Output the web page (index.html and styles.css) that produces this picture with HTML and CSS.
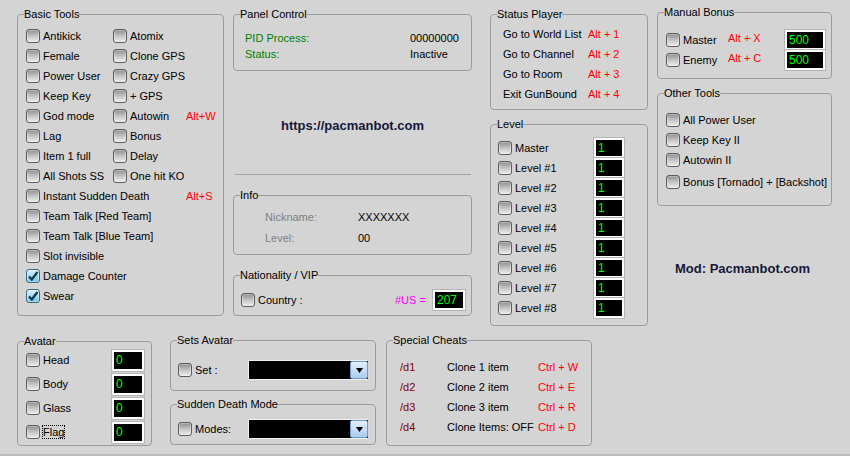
FILE: index.html
```html
<!DOCTYPE html>
<html lang="en">
<head>
    <meta charset="UTF-8">
    <title>Pacmanbot</title>
    <link rel="stylesheet" href="styles.css">
</head>
<body>
<div class="window">
    <div class="top">
        <div class="col c1">
            <fieldset class="basic">
                <legend>Basic Tools</legend>
                <div class="row"><label class="opt w1"><span class="chk"></span>Antikick</label><label class="opt w2"><span class="chk"></span>Atomix</label></div>
                <div class="row"><label class="opt w1"><span class="chk"></span>Female</label><label class="opt w2"><span class="chk"></span>Clone GPS</label></div>
                <div class="row"><label class="opt w1"><span class="chk"></span>Power User</label><label class="opt w2"><span class="chk"></span>Crazy GPS</label></div>
                <div class="row"><label class="opt w1"><span class="chk"></span>Keep Key</label><label class="opt w2"><span class="chk"></span>+ GPS</label></div>
                <div class="row"><label class="opt w1"><span class="chk"></span>God mode</label><label class="opt w2"><span class="chk"></span>Autowin</label><span class="hot">Alt+W</span></div>
                <div class="row"><label class="opt w1"><span class="chk"></span>Lag</label><label class="opt w2"><span class="chk"></span>Bonus</label></div>
                <div class="row"><label class="opt w1"><span class="chk"></span>Item 1 full</label><label class="opt w2"><span class="chk"></span>Delay</label></div>
                <div class="row"><label class="opt w1"><span class="chk"></span>All Shots SS</label><label class="opt w2"><span class="chk"></span>One hit KO</label></div>
                <div class="row"><label class="opt w12"><span class="chk"></span>Instant Sudden Death</label><span class="hot">Alt+S</span></div>
                <div class="row"><label class="opt"><span class="chk"></span>Team Talk [Red Team]</label></div>
                <div class="row"><label class="opt"><span class="chk"></span>Team Talk [Blue Team]</label></div>
                <div class="row"><label class="opt"><span class="chk"></span>Slot invisible</label></div>
                <div class="row"><label class="opt"><span class="chk on"><svg width="12" height="12" viewBox="0 0 12 12"><path d="M2 6.5 L4.8 9.5 L10.5 2" fill="none" stroke="#0d3b4c" stroke-width="2.2"/></svg></span>Damage Counter</label></div>
                <div class="row"><label class="opt"><span class="chk on"><svg width="12" height="12" viewBox="0 0 12 12"><path d="M2 6.5 L4.8 9.5 L10.5 2" fill="none" stroke="#0d3b4c" stroke-width="2.2"/></svg></span>Swear</label></div>
            </fieldset>
        </div>

        <div class="col c2">
            <fieldset class="panel">
                <legend>Panel Control</legend>
                <div class="line16"><span class="green key">PID Process:</span><span>00000000</span></div>
                <div class="line16"><span class="green key">Status:</span><span>Inactive</span></div>
            </fieldset>
            <div class="url">https://pacmanbot.com</div>
            <div class="sep"></div>
            <fieldset class="info">
                <legend>Info</legend>
                <div class="line21"><span class="grey key2">Nickname:</span><span>XXXXXXX</span></div>
                <div class="line21"><span class="grey key2">Level:</span><span>00</span></div>
            </fieldset>
            <fieldset class="nation">
                <legend>Nationality / VIP</legend>
                <div class="row r20">
                    <label class="opt wc"><span class="chk"></span>Country :</label>
                    <span class="magenta wus">#US =</span>
                    <span class="box b32">207</span>
                </div>
            </fieldset>
        </div>

        <div class="col c3">
            <fieldset class="status">
                <legend>Status Player</legend>
                <div class="row"><span class="ws">Go to World List</span><span class="hot">Alt + 1</span></div>
                <div class="row"><span class="ws">Go to Channel</span><span class="hot">Alt + 2</span></div>
                <div class="row"><span class="ws">Go to Room</span><span class="hot">Alt + 3</span></div>
                <div class="row"><span class="ws">Exit GunBound</span><span class="hot">Alt + 4</span></div>
            </fieldset>
            <fieldset class="level">
                <legend>Level</legend>
                <div class="row"><label class="opt wl"><span class="chk"></span>Master</label><span class="box b30">1</span></div>
                <div class="row"><label class="opt wl"><span class="chk"></span>Level #1</label><span class="box b30">1</span></div>
                <div class="row"><label class="opt wl"><span class="chk"></span>Level #2</label><span class="box b30">1</span></div>
                <div class="row"><label class="opt wl"><span class="chk"></span>Level #3</label><span class="box b30">1</span></div>
                <div class="row"><label class="opt wl"><span class="chk"></span>Level #4</label><span class="box b30">1</span></div>
                <div class="row"><label class="opt wl"><span class="chk"></span>Level #5</label><span class="box b30">1</span></div>
                <div class="row"><label class="opt wl"><span class="chk"></span>Level #6</label><span class="box b30">1</span></div>
                <div class="row"><label class="opt wl"><span class="chk"></span>Level #7</label><span class="box b30">1</span></div>
                <div class="row"><label class="opt wl"><span class="chk"></span>Level #8</label><span class="box b30">1</span></div>
            </fieldset>
        </div>

        <div class="col c4">
            <fieldset class="bonus">
                <legend>Manual Bonus</legend>
                <div class="row"><label class="opt wm"><span class="chk"></span>Master</label><span class="hot wa up">Alt + X</span><span class="box b40">500</span></div>
                <div class="row"><label class="opt wm"><span class="chk"></span>Enemy</label><span class="hot wa up">Alt + C</span><span class="box b40">500</span></div>
            </fieldset>
            <fieldset class="other">
                <legend>Other Tools</legend>
                <div class="row"><label class="opt"><span class="chk"></span>All Power User</label></div>
                <div class="row"><label class="opt"><span class="chk"></span>Keep Key II</label></div>
                <div class="row"><label class="opt"><span class="chk"></span>Autowin II</label></div>
                <div class="row gap2"><label class="opt"><span class="chk"></span>Bonus [Tornado] + [Backshot]</label></div>
            </fieldset>
            <div class="mod">Mod: Pacmanbot.com</div>
        </div>
    </div>

    <div class="bottom">
        <fieldset class="avatar">
            <legend>Avatar</legend>
            <div class="row r24"><label class="opt wv"><span class="chk"></span>Head</label><span class="box b32 h21">0</span></div>
            <div class="row r24"><label class="opt wv"><span class="chk"></span>Body</label><span class="box b32 h21">0</span></div>
            <div class="row r24"><label class="opt wv"><span class="chk"></span>Glass</label><span class="box b32 h21">0</span></div>
            <div class="row r24"><label class="opt wv"><span class="chk"></span><span class="focus">Flag</span></label><span class="box b32 h21">0</span></div>
        </fieldset>

        <div class="col c6">
            <fieldset class="sets">
                <legend>Sets Avatar</legend>
                <div class="row"><label class="opt wd"><span class="chk"></span>Set :</label><span class="combo"><span class="drop"><svg width="7" height="5" viewBox="0 0 7 5"><path d="M0 0 H7 L3.5 5 Z" fill="#000"/></svg></span></span></div>
            </fieldset>
            <fieldset class="sudden">
                <legend>Sudden Death Mode</legend>
                <div class="row"><label class="opt wd"><span class="chk"></span>Modes:</label><span class="combo"><span class="drop"><svg width="7" height="5" viewBox="0 0 7 5"><path d="M0 0 H7 L3.5 5 Z" fill="#000"/></svg></span></span></div>
            </fieldset>
        </div>

        <fieldset class="special">
            <legend>Special Cheats</legend>
            <div class="row"><span class="cmd">/d1</span><span class="what">Clone 1 item</span><span class="hot">Ctrl + W</span></div>
            <div class="row"><span class="cmd">/d2</span><span class="what">Clone 2 item</span><span class="hot">Ctrl + E</span></div>
            <div class="row"><span class="cmd">/d3</span><span class="what">Clone 3 item</span><span class="hot">Ctrl + R</span></div>
            <div class="row"><span class="cmd">/d4</span><span class="what">Clone Items: OFF</span><span class="hot">Ctrl + D</span></div>
        </fieldset>
    </div>
</div>
</body>
</html>
```

FILE: styles.css
```css
body {
    margin: 0;
    background-color: #d4d4d4;
    font-family: "Liberation Sans", Arial, sans-serif;
    font-size: 11px;
    color: #000000;
    overflow: hidden;
}

.window {
    width: 850px;
    height: 454px;
    border-bottom: 2px solid #bcbcbc;
}

.top {
    display: flex;
    align-items: flex-start;
    height: 334px;
    padding: 8px 0 0 17px;
    box-sizing: border-box;
}

.bottom {
    display: flex;
    align-items: flex-start;
    padding-left: 17px;
}

.col {
    display: flex;
    flex-direction: column;
}

.c1 { width: 207px; }
.c2 { width: 239px; margin-left: 9px; }
.c3 { width: 158px; margin-left: 18px; }
.c4 { width: 175px; margin-left: 9px; margin-top: -2px; }
.c6 { width: 206px; margin-left: 18px; }

/* --pl is the inner left padding; the legend always sits 7px from the border */
fieldset {
    --pl: 0px;
    margin: 0;
    padding: 0 0 0 var(--pl);
    border: 1px solid #9c9c9c;
    border-radius: 4px;
    min-width: 0;
}

legend {
    padding: 0;
    margin-left: calc(6px - var(--pl));
    line-height: 13px;
}

.row {
    display: flex;
    align-items: center;
    height: 20px;
    white-space: nowrap;
}

.r20 { height: 20px; }
.r24 { height: 24px; }
.gap2 { margin-top: 2px; }

.opt {
    display: flex;
    align-items: center;
    gap: 3px;
}

.chk {
    width: 14px;
    height: 14px;
    box-sizing: border-box;
    border: 1px solid #5c5c5c;
    border-radius: 3px;
    background: linear-gradient(#8c8c8c, #c4c4c4 50%, #ededed);
    box-shadow: inset 0 0 0 1px rgba(255, 255, 255, 0.35);
    flex: none;
    display: flex;
    align-items: center;
    justify-content: center;
}

.chk.on {
    border-color: #3b6b7e;
    background: linear-gradient(#d9f1fb, #79c3e4);
}

.hot { color: #ff0000; }
.green { color: #008000; }
.grey { color: #808080; }
.magenta { color: #ff00ff; }

.box {
    display: flex;
    align-items: center;
    box-sizing: border-box;
    height: 20px;
    padding-left: 2px;
    background: #000000;
    color: #00ff00;
    border: 2px solid #ffffff;
    box-shadow: 0 0 0 1px #b4b4b4;
    font-size: 12px;
}

.b30 { width: 30px; }
.b32 { width: 32px; }
.b40 { width: 40px; }
.h21 { height: 21px; }

/* Basic Tools */
.basic { --pl: 8px; padding-top: 5px; padding-bottom: 9px; }
.w1 { width: 87px; }
.w2 { width: 73px; }
.w12 { width: 160px; }

/* Panel Control */
.panel { --pl: 11px; padding-top: 9px; padding-bottom: 8px; }
.line16 { display: flex; height: 16px; align-items: center; }
.line21 { display: flex; height: 21px; align-items: center; }
.key { width: 165px; }
.key2 { width: 93px; }

.url {
    margin-top: 47px;
    line-height: 16px;
    text-align: center;
    font-size: 13px;
    font-weight: bold;
    color: #14183a;
}

.sep {
    height: 1px;
    margin: 40px 1px 0 2px;
    background: #a2a2a2;
}

.info { --pl: 31px; margin-top: 14px; padding-top: 4px; padding-bottom: 6px; }

.nation { --pl: 7px; margin-top: 14px; padding-top: 8px; padding-bottom: 5px; }
.wc { width: 154px; }
.wus { width: 38px; }

/* Status / Level */
.status { --pl: 12px; padding-top: 3px; padding-bottom: 5px; }
.ws { width: 85px; }

.level { --pl: 7px; margin-top: 8px; padding-top: 7px; padding-bottom: 7px; }
.wl { width: 96px; }

/* Manual bonus / other */
.bonus { --pl: 8px; padding-top: 11px; padding-bottom: 8px; }
.wm { width: 62px; }
.wa { width: 57px; }
.up { position: relative; top: -2px; }

.other { --pl: 8px; margin-top: 8px; padding-top: 10px; padding-bottom: 13px; }

.mod {
    margin-top: 55px;
    padding-left: 18px;
    line-height: 16px;
    font-size: 13px;
    font-weight: bold;
    color: #14183a;
}

/* Bottom row */
.avatar { --pl: 8px; width: 135px; margin-top: 1px; padding-bottom: 1px; box-sizing: border-box; }
.wv { width: 86px; }
.focus { outline: 1px dotted #000000; outline-offset: 0; }

.sets { --pl: 7px; padding-top: 13px; padding-bottom: 10px; }
.sudden { --pl: 7px; margin-top: 7px; padding-top: 8px; padding-bottom: 5px; }
.wd { width: 70px; }

.combo {
    display: flex;
    justify-content: flex-end;
    box-sizing: border-box;
    width: 120px;
    height: 20px;
    background: #000000;
    border: 1px solid #f0f0f0;
    border-right: none;
}

.drop {
    display: flex;
    align-items: center;
    justify-content: center;
    box-sizing: border-box;
    width: 18px;
    height: 100%;
    border: 1px solid #6f98c8;
    border-radius: 2px;
    background: linear-gradient(#e2f0fd, #a9cbf1);
}

.special { --pl: 13px; width: 206px; margin-left: 10px; padding-top: 10px; padding-bottom: 8px; box-sizing: border-box; }
.cmd { width: 47px; color: #800000; }
.what { width: 91px; }
```
